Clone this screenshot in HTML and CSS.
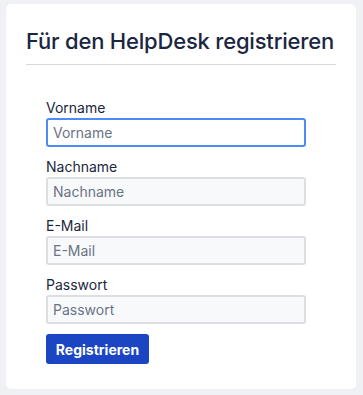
FILE: index.html
```html
<!DOCTYPE html>
<html lang="de">
<head>
<meta charset="utf-8">
<link rel="stylesheet" href="styles.css">
</head>
<body>
<div class="card">
  <h2 class="title">Für den HelpDesk registrieren</h2>
  <form class="form">
    <div class="field">
      <label class="label">Vorname</label>
      <input class="input focused" type="text" placeholder="Vorname">
    </div>
    <div class="field">
      <label class="label">Nachname</label>
      <input class="input" type="text" placeholder="Nachname">
    </div>
    <div class="field">
      <label class="label">E-Mail</label>
      <input class="input" type="text" placeholder="E-Mail">
    </div>
    <div class="field">
      <label class="label">Passwort</label>
      <input class="input" type="password" placeholder="Passwort">
    </div>
    <button class="btn" type="button">Registrieren</button>
  </form>
</div>
</body>
</html>
```
FILE: styles.css
```css
html, body { margin: 0; padding: 0; }
body {
  background: #f0f1f5;
  font-family: Inter, "Noto Sans", sans-serif;
  color: #1b2640;
  padding: 4px 7px 6px 6px;
}
.card {
  background: #fff;
  border-radius: 5px;
  padding: 22px 20px 24px 20px;
  height: 385px;
  box-sizing: border-box;
}
.title {
  margin: 0;
  font-size: 22px;
  font-weight: 500;
  line-height: 30px;
  padding-bottom: 8px;
  border-bottom: 1px solid #d8d9dd;
  color: #1b2640;
  letter-spacing: -0.2px;
}
.form {
  padding: 34px 0 0 20px;
  display: flex;
  flex-direction: column;
  align-items: flex-start;
}
.field {
  display: flex;
  flex-direction: column;
  margin-bottom: 11px;
}
.label {
  font-size: 14px;
  line-height: 17px;
  margin-bottom: 2px;
  color: #1b2640;
}
.input {
  width: 260px;
  height: 29px;
  box-sizing: border-box;
  border: 2px solid #dddee3;
  border-radius: 3px;
  background: #f8f9fb;
  font-family: Inter, "Noto Sans", sans-serif;
  font-size: 14px;
  padding: 0 5px;
  color: #1b2640;
  outline: none;
}
.input::placeholder { color: #6b7386; }
.input.focused {
  border-color: #4c8af7;
  background: #fff;
}
.btn {
  margin-top: -1px;
  background: #1b45c2;
  color: #fff;
  border: none;
  border-radius: 3px;
  font-family: Inter, "Noto Sans", sans-serif;
  font-weight: 700;
  font-size: 14px;
  width: 103px;
  height: 30px;
  padding: 0;
}
```
